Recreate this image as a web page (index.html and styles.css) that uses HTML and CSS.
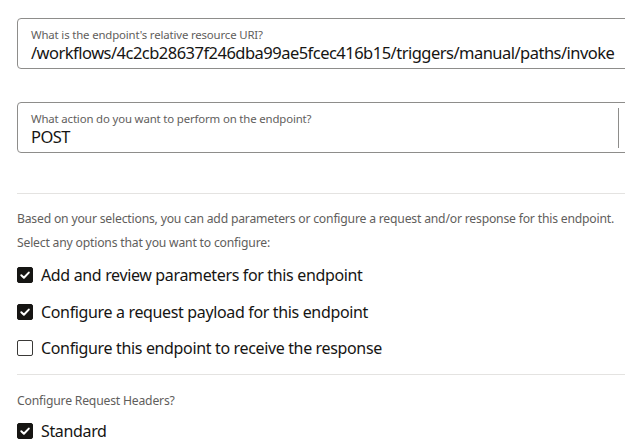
FILE: index.html
```html
<!DOCTYPE html>
<html lang="en">
<head>
<meta charset="utf-8">
<title>Endpoint configuration</title>
<link rel="stylesheet" href="styles.css">
</head>
<body>
<div class="page">
  <div class="field field-uri">
    <div class="field-body">
      <div class="field-label">What is the endpoint's relative resource URI?</div>
      <div class="field-value">/workflows/4c2cb28637f246dba99ae5fcec416b15/triggers/manual/paths/invoke</div>
    </div>
  </div>

  <div class="field field-action">
    <div class="field-body">
      <div class="field-label">What action do you want to perform on the endpoint?</div>
      <div class="field-value">POST</div>
    </div>
    <div class="field-sep"></div>
  </div>

  <hr class="divider divider-first">

  <p class="help help-first">Based on your selections, you can add parameters or configure a request and/or response for this endpoint.</p>
  <p class="help">Select any options that you want to configure:</p>

  <div class="options">
    <label class="option">
      <span class="box checked"><svg viewBox="0 0 16 16" width="16" height="16"><path d="M4.3 8.3 L6.9 10.8 L11.8 5.6" fill="none" stroke="#fff" stroke-width="2" stroke-linecap="round" stroke-linejoin="round"/></svg></span>
      <span class="option-text">Add and review parameters for this endpoint</span>
    </label>
    <label class="option">
      <span class="box checked"><svg viewBox="0 0 16 16" width="16" height="16"><path d="M4.3 8.3 L6.9 10.8 L11.8 5.6" fill="none" stroke="#fff" stroke-width="2" stroke-linecap="round" stroke-linejoin="round"/></svg></span>
      <span class="option-text">Configure a request payload for this endpoint</span>
    </label>
    <label class="option">
      <span class="box"></span>
      <span class="option-text">Configure this endpoint to receive the response</span>
    </label>
  </div>

  <hr class="divider divider-second">

  <p class="help help-headers">Configure Request Headers?</p>

  <div class="options options-headers">
    <label class="option">
      <span class="box checked"><svg viewBox="0 0 16 16" width="16" height="16"><path d="M4.3 8.3 L6.9 10.8 L11.8 5.6" fill="none" stroke="#fff" stroke-width="2" stroke-linecap="round" stroke-linejoin="round"/></svg></span>
      <span class="option-text">Standard</span>
    </label>
  </div>
</div>
</body>
</html>
```

FILE: styles.css
```css
html, body {
  margin: 0;
  padding: 0;
  background: #ffffff;
  overflow: hidden;
}

body {
  font-family: "Noto Sans", "Open Sans", sans-serif;
  color: #161513;
}

.page {
  width: 660px;
  padding: 18px 0 0 17px;
  display: flex;
  flex-direction: column;
}

.field {
  height: 51px;
  box-sizing: border-box;
  border: 1px solid #8e8d8b;
  border-radius: 4px;
  display: flex;
  align-items: center;
  padding: 0 13px;
}

.field-action {
  margin-top: 33px;
}

.field-body {
  flex: 1;
  display: flex;
  flex-direction: column;
  gap: 1px;
  padding-top: 2px;
}

.field-label {
  font-size: 11.4px;
  line-height: 14px;
  color: #5f5e5c;
  letter-spacing: -0.15px;
}

.field-value {
  font-size: 16.5px;
  line-height: 19px;
  color: #161513;
  letter-spacing: -0.52px;
  white-space: nowrap;
}

.field-sep {
  width: 1px;
  height: 40px;
  background: #8e8d8b;
  margin-right: 44px;
}

.divider {
  border: 0;
  border-top: 1px solid #e4e3e1;
  margin: 0;
  width: 100%;
}

.divider-first {
  margin-top: 40px;
}

.help {
  margin: 0;
  font-size: 12.2px;
  line-height: 24px;
  color: #5f5e5c;
  letter-spacing: -0.2px;
}

.help-first {
  margin-top: 13px;
}

.options {
  display: flex;
  flex-direction: column;
  margin-top: 2px;
}

.option {
  display: flex;
  align-items: center;
  gap: 8px;
  height: 36.5px;
}

.box {
  width: 16px;
  height: 16px;
  box-sizing: border-box;
  border: 1.5px solid #3a3937;
  border-radius: 2px;
  display: flex;
  align-items: center;
  justify-content: center;
  flex: none;
}

.box.checked {
  background: #161513;
  border-color: #161513;
}

.box svg {
  display: block;
  flex: none;
}

.option-text {
  font-size: 16px;
  color: #161513;
  letter-spacing: -0.35px;
}

.divider-second {
  margin-top: 7px;
}

.help-headers {
  margin-top: 14px;
}

.options-headers {
  margin-top: 0;
}
```
